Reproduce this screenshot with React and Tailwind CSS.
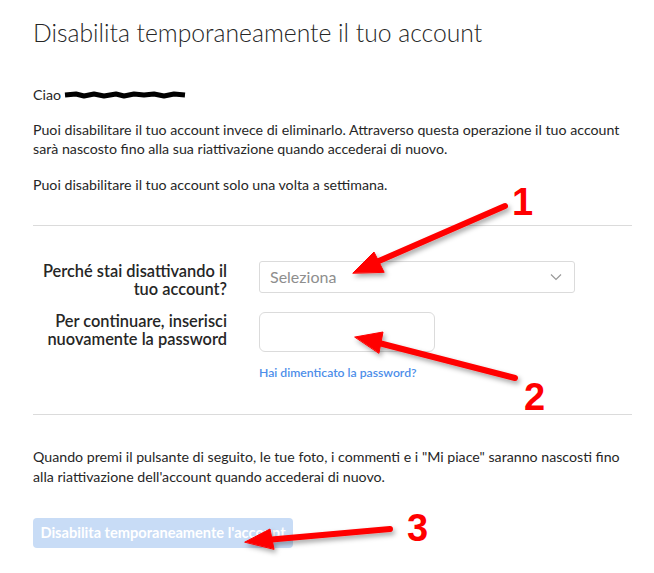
import React from 'react'

function Arrows() {
  return (
    <svg className="absolute inset-0 pointer-events-none" width="654" height="573" viewBox="0 0 654 573">
      <defs>
        <filter id="sh" x="-20%" y="-20%" width="140%" height="140%">
          <feDropShadow dx="2" dy="3" stdDeviation="2.5" floodColor="#000" floodOpacity="0.35" />
        </filter>
      </defs>
      <g filter="url(#sh)" fill="#ff0000" stroke="#ff0000" strokeLinecap="round">
        {/* 1 */}
        <line x1="505" y1="206" x2="372" y2="264" strokeWidth="6" />
        <polygon points="353,273 374,252 384,272" strokeWidth="1" strokeLinejoin="round" />
        {/* 2 */}
        <line x1="515" y1="378" x2="375" y2="342" strokeWidth="6" />
        <polygon points="355,337 383,332 379,353" strokeWidth="1" strokeLinejoin="round" />
        {/* 3 */}
        <line x1="390" y1="529" x2="266" y2="540" strokeWidth="6" />
        <polygon points="245,542 270,529 274,549" strokeWidth="1" strokeLinejoin="round" />
      </g>
      <g fill="#ff0000" fontFamily="'Liberation Sans', Arial, sans-serif" fontWeight="700" fontSize="38">
        <text x="512" y="215">1</text>
        <text x="524" y="410">2</text>
        <text x="407" y="541">3</text>
      </g>
    </svg>
  )
}

function Redacted() {
  return (
    <svg className="ml-[3px]" width="122" height="10" viewBox="0 0 122 10">
      <path
        d="M1 5 L12 4 L20 6 L30 4 L40 6 L52 4 L60 6 L70 4 L80 5 L90 4 L100 6 L110 4 L121 5"
        fill="none"
        stroke="#000"
        strokeWidth="5"
        strokeLinejoin="round"
      />
    </svg>
  )
}

export default function App() {
  return (
    <div
      className="relative w-[654px] h-[573px] bg-white overflow-hidden text-[#262626]"
      style={{ fontFamily: "Lato, 'Noto Sans', sans-serif" }}
    >
      <div className="pl-[33px] pr-[22px] pt-[18px]">
        <h1 className="text-[24.7px] leading-[30px] font-light">
          Disabilita temporaneamente il tuo account
        </h1>

        <p className="mt-[37px] text-[14.2px] leading-[20px] flex items-center">
          Ciao
          <Redacted />
        </p>

        <p className="mt-[15px] text-[14.2px] leading-[19px]">
          Puoi disabilitare il tuo account invece di eliminarlo. Attraverso questa operazione il tuo account
          <br />
          sarà nascosto fino alla sua riattivazione quando accederai di nuovo.
        </p>

        <p className="mt-[17px] text-[14.2px] leading-[19px]">
          Puoi disabilitare il tuo account solo una volta a settimana.
        </p>

        <div className="mt-[31px] h-px bg-[#dbdbdb]" />

        <div className="mt-[35px] grid grid-cols-[194px_1fr] gap-x-[32px]">
          <label className="text-right text-[16.4px] leading-[18px] font-semibold pt-[1px]">
            Perché stai disattivando il
            <br />
            tuo account?
          </label>
          <div className="w-[316px] h-[32px] border border-[#dbdbdb] rounded-[3px] flex items-center justify-between pl-[10px] pr-[12px]">
            <span className="text-[16px] text-[#8e8e8e]">Seleziona</span>
            <svg width="12" height="8" viewBox="0 0 12 8">
              <polyline points="1,1.5 6,6.5 11,1.5" fill="none" stroke="#999" strokeWidth="1.2" />
            </svg>
          </div>

          <label className="mt-[14px] text-right text-[16.4px] leading-[18px] font-semibold">
            Per continuare, inserisci
            <br />
            nuovamente la password
          </label>
          <div className="mt-[14px]">
            <div className="w-[176px] h-[40px] border border-[#dbdbdb] rounded-[6px]" />
            <a className="block mt-[12px] text-[12.2px] font-semibold text-[#4d8ee9]">
              Hai dimenticato la password?
            </a>
          </div>
        </div>

        <div className="mt-[32px] h-px bg-[#dbdbdb]" />

        <p className="mt-[32px] text-[14.2px] leading-[20px]">
          Quando premi il pulsante di seguito, le tue foto, i commenti e i "Mi piace" saranno nascosti fino
          <br />
          alla riattivazione dell'account quando accederai di nuovo.
        </p>

        <button className="mt-[31px] w-[260px] h-[30px] rounded-[4px] bg-[#c8dcf6] text-white text-[14.6px] font-bold">
          Disabilita temporaneamente l'account
        </button>
      </div>
      <Arrows />
    </div>
  )
}
